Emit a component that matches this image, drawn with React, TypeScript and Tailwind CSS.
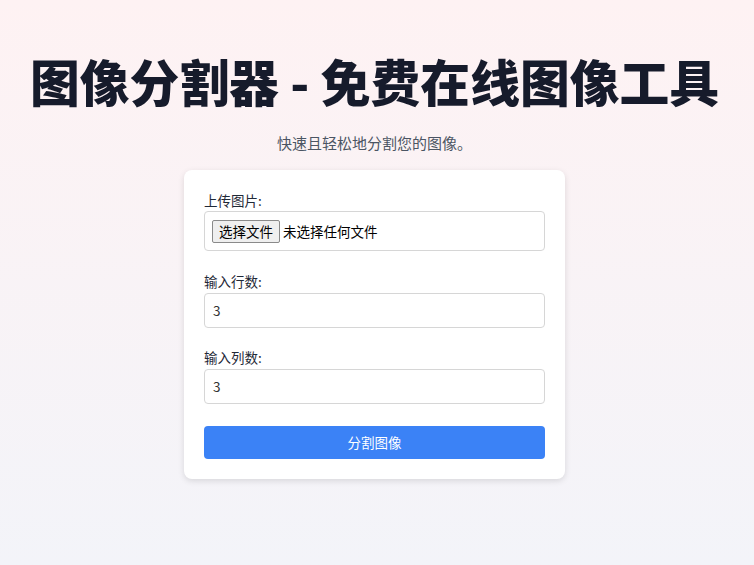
import React from "react";

export default function App() {
  return (
    <div className="min-h-screen w-full bg-linear-to-b from-[#fef2f3] to-[#f3f4f9] font-['Noto_Sans_CJK_SC',_'Noto_Sans',_sans-serif]">
      <div className="w-[749px] pt-[53px]">
        <h1 className="text-center text-[49.8px] leading-[54px] font-black text-[#161b2b]">
          图像分割器 - 免费在线图像工具
        </h1>
        <p className="mt-[25px] text-center text-[15px] leading-[22px] text-[#4b5563]">
          快速且轻松地分割您的图像。
        </p>
        <div className="mx-auto mt-[16px] w-[381px] rounded-lg bg-white p-5 shadow-[0_2px_6px_rgba(0,0,0,0.12)]">
          <label className="block text-[13.5px] leading-[20px] text-[#1f2937]">上传图片:</label>
          <div className="mt-px flex h-[40px] items-center rounded border border-[#d6d6d6] bg-white px-[7px]">
            <span className="flex h-[23px] items-center rounded-[2px] border border-[#8a8a8a] bg-[#efefef] px-[6px] text-[13.5px] text-black">
              选择文件
            </span>
            <span className="ml-[3px] text-[13.5px] text-black">未选择任何文件</span>
          </div>

          <label className="mt-5 block text-[13.5px] leading-[20px] text-[#1f2937]">输入行数:</label>
          <div className="mt-[2px] flex h-[35px] items-center rounded border border-[#d6d6d6] bg-white px-[8px] text-[13.5px] text-[#333]">
            3
          </div>

          <label className="mt-[19px] block text-[13.5px] leading-[20px] text-[#1f2937]">输入列数:</label>
          <div className="mt-[2px] flex h-[35px] items-center rounded border border-[#d6d6d6] bg-white px-[8px] text-[13.5px] text-[#333]">
            3
          </div>

          <button className="mt-[22px] flex h-[33px] w-full items-center justify-center rounded bg-[#3b82f6] text-[13.5px] text-white">
            分割图像
          </button>
        </div>
      </div>
    </div>
  );
}
